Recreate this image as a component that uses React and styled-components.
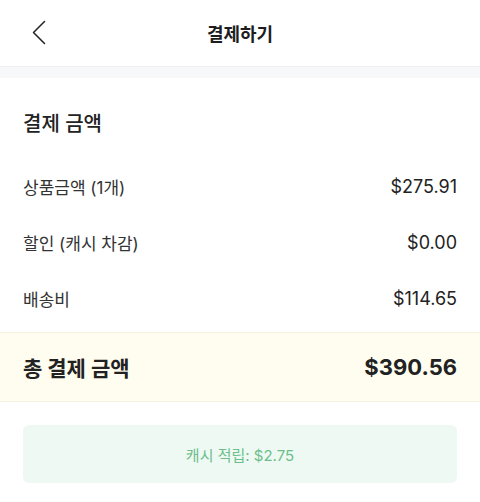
import React from "react";
import styled, { createGlobalStyle } from "styled-components";

const Global = createGlobalStyle`
  html, body { margin: 0; padding: 0; background: #fff; }
  body { font-family: "Inter", "Noto Sans CJK KR", sans-serif; -webkit-font-smoothing: antialiased; }
  * { box-sizing: border-box; }
`;

const Page = styled.div`
  width: 480px;
  background: #fff;
`;

const Header = styled.header`
  height: 67px;
  display: flex;
  align-items: center;
  justify-content: center;
  position: relative;
  border-bottom: 1px solid #eceef1;
`;

const BackButton = styled.button`
  position: absolute;
  left: 26px;
  top: 17px;
  width: 26px;
  height: 30px;
  border: 0;
  padding: 0;
  background: transparent;
  display: flex;
  align-items: center;
  justify-content: center;
`;

const Title = styled.h1`
  margin: 0;
  font-size: 18px;
  font-weight: 700;
  color: #1d1d1f;
  letter-spacing: 0;
`;

const Divider = styled.div`
  height: 11px;
  background: #f7f8fa;
`;

const Section = styled.section`
  padding: 32px 23px 6px;
`;

const SectionTitle = styled.h2`
  margin: 0 0 20px;
  font-size: 20px;
  line-height: 28px;
  font-weight: 500;
  color: #222;
`;

const Row = styled.div`
  height: 56px;
  display: flex;
  align-items: center;
  justify-content: space-between;
  font-size: 17px;
  color: #333;
`;

const Value = styled.span`
  font-size: 18px;
  color: #222;
`;

const TotalBand = styled.div`
  height: 70px;
  padding: 0 23px;
  display: flex;
  align-items: center;
  justify-content: space-between;
  background: #fffdef;
  border-top: 1px solid #f4f1df;
  border-bottom: 1px solid #f4f1df;
`;

const TotalLabel = styled.span`
  font-size: 21px;
  font-weight: 700;
  color: #222;
`;

const TotalValue = styled.span`
  font-size: 22px;
  font-weight: 700;
  color: #222;
`;

const CashBox = styled.div`
  margin: 23px 23px 0;
  height: 58px;
  border-radius: 6px;
  background: #eff9f3;
  display: flex;
  align-items: center;
  justify-content: center;
  font-size: 15px;
  color: #6cbf8c;
`;

const rows = [
  ["상품금액 (1개)", "$275.91"],
  ["할인 (캐시 차감)", "$0.00"],
  ["배송비", "$114.65"],
];

export default function App() {
  return (
    <Page>
      <Global />
      <Header>
        <BackButton aria-label="뒤로">
          <svg width="14" height="25" viewBox="0 0 14 25" fill="none">
            <path d="M12.5 1.5 L1.5 12.5 L12.5 23.5" stroke="#222" strokeWidth="1.5" strokeLinecap="round" strokeLinejoin="round" />
          </svg>
        </BackButton>
        <Title>결제하기</Title>
      </Header>
      <Divider />
      <Section>
        <SectionTitle>결제 금액</SectionTitle>
        {rows.map(([label, value]) => (
          <Row key={label}>
            <span>{label}</span>
            <Value>{value}</Value>
          </Row>
        ))}
      </Section>
      <TotalBand>
        <TotalLabel>총 결제 금액</TotalLabel>
        <TotalValue>$390.56</TotalValue>
      </TotalBand>
      <CashBox>캐시 적립: $2.75</CashBox>
    </Page>
  );
}
